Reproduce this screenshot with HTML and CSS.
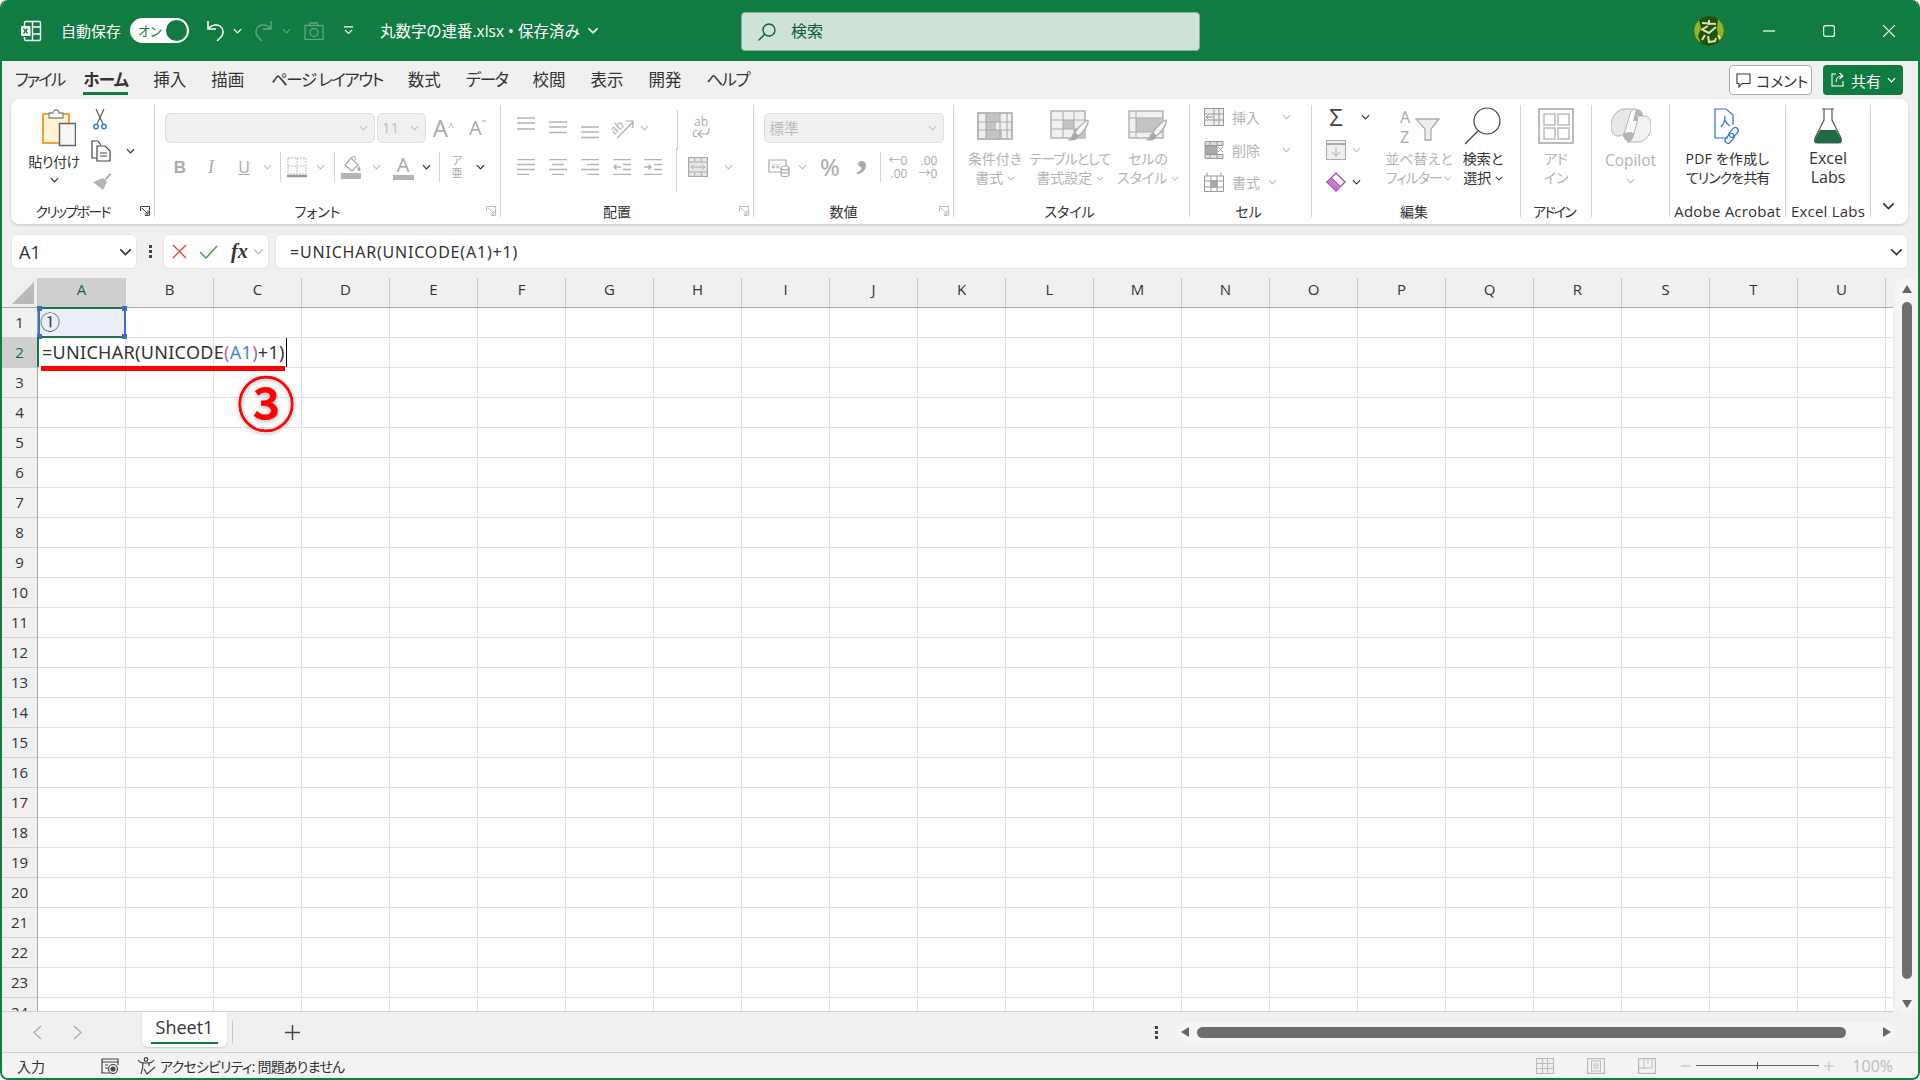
FILE: index.html
```html
<!DOCTYPE html>
<html lang="ja">
<head>
    <meta charset="UTF-8">
    <title>丸数字の連番.xlsx - Excel</title>
    <link rel="stylesheet" href="styles.css">
</head>
<body>
<svg class="sprites" width="0" height="0">
    <symbol id="chev" viewBox="0 0 10 6"><path d="M1 1l4 4 4-4" fill="none" stroke="currentColor" stroke-width="1.3"/></symbol>
    <symbol id="launcher" viewBox="0 0 10 10"><path d="M.5 5V.5H9.5V9.5H5M2 2l6 6M8 4.500V8H4.500" fill="none" stroke="currentColor"/></symbol>
    <symbol id="brush" viewBox="0 0 24 24"><path d="M22 2c-3 1-11 8-13 13l3 3c4-2 11-11 10-16z" fill="#f7f7f7" stroke="#aaa" stroke-width="1.2"/><path d="M9 15c-3 0-3 3-4 5-1 1-3 2-4 2 4 1 11 1 11-4z" fill="#aaa"/></symbol>
</svg>

<div class="window">
    <header class="titlebar">
        <svg class="t-excel" width="24" height="24" viewBox="0 0 24 24" fill="none" stroke="#fff" stroke-width="1.4"><path d="M7 2.500h13a1.500 1.500 0 0 1 1.500 1.500v16a1.500 1.500 0 0 1-1.500 1.500H7a1.500 1.500 0 0 1-1.500-1.500v-2M5.500 7V4A1.500 1.500 0 0 1 7 2.500M13.500 2.500v19M13.500 8h8M13.500 15h8"/><rect x="2" y="7" width="9.500" height="10" rx="1" fill="#fff" stroke="none"/><path d="M4.500 9.500l4 5M8.500 9.500l-4 5" stroke="#107c41"/></svg>
        <span class="t-autosave">自動保存</span>
        <div class="toggle"><span>オン</span><i></i></div>
        <svg class="t-undo" width="20" height="22" viewBox="0 0 20 22" fill="none" stroke="#fff" stroke-width="1.500"><path d="M2 1v8h8M2 9c3-4 8-5 12-3 4 3 4 8 1 11l-4 4"/></svg>
        <svg class="t-chev first" width="9" height="6"><use href="#chev"/></svg>
        <svg class="t-redo" width="20" height="22" viewBox="0 0 20 22" fill="none" stroke="#5fa585" stroke-width="1.500"><path d="M18 1v8h-8M18 9c-3-4-8-5-12-3-4 3-4 8-1 11l4 4"/></svg>
        <svg class="t-chev dim" width="9" height="6"><use href="#chev"/></svg>
        <svg class="t-camera" width="20" height="18" viewBox="0 0 20 18" fill="none" stroke="#5fa585" stroke-width="1.300"><path d="M1 3.500h18v14H1zM5 3.500l1-2.500h7l1 2.500"/><circle cx="10" cy="10.500" r="4"/></svg>
        <svg class="t-qat" width="11" height="9" viewBox="0 0 11 9" fill="none" stroke="#fff" stroke-width="1.200"><path d="M1 .8h9M2 4l3.500 3.500L9 4"/></svg>
        <span class="t-file">丸数字の連番.xlsx <b>•</b> 保存済み</span>
        <svg class="t-file-chev" width="12" height="7"><use href="#chev"/></svg>
        <div class="search">
            <svg width="20" height="20" viewBox="0 0 20 20" fill="none" stroke="#0d5c33" stroke-width="1.300"><circle cx="12" cy="8" r="6"/><path d="M7.500 12.500L1.500 18.500"/></svg>
            <span>検索</span>
        </div>
        <div class="avatar">
            <svg width="30" height="30" viewBox="0 0 30 30"><circle cx="15" cy="15" r="15" fill="#24500f"/><path d="M0 15a15 15 0 0 1 5-11l2 8-3 8 3 7A15 15 0 0 1 0 15zM30 15a15 15 0 0 0-6-12l-1 10 2 12a15 15 0 0 0 5-10z" fill="#8fb51f"/><path d="M8 7l14 1M15 4v5M7 14l7-4M22 11l-7 6-6-3M11 19l-3 5M14 20l1 6 6-1 1-3M24 19l2 4" stroke="#d8e8a0" stroke-width="2" fill="none"/></svg>
        </div>
        <div class="win-btns">
            <svg width="12" height="12" viewBox="0 0 12 12" stroke="#fff" stroke-width="1.200"><path d="M0 6h12"/></svg>
            <svg width="12" height="12" viewBox="0 0 12 12" fill="none" stroke="#fff" stroke-width="1.200"><rect x=".6" y=".6" width="10.800" height="10.800" rx="2"/></svg>
            <svg width="12" height="12" viewBox="0 0 12 12" stroke="#fff" stroke-width="1.200"><path d="M0 0l12 12M12 0L0 12"/></svg>
        </div>
    </header>

    <nav class="tabs">
        <span class="kana file-tab">ファイル</span>
        <span class="active">ホーム</span>
        <span>挿入</span>
        <span class="draw-tab">描画</span>
        <span class="kana">ページ レイアウト</span>
        <span>数式</span>
        <span class="kana">データ</span>
        <span>校閲</span>
        <span>表示</span>
        <span>開発</span>
        <span class="kana">ヘルプ</span>
        <div class="tab-actions">
            <button class="comment">
                <svg width="15" height="15" viewBox="0 0 15 15" fill="none" stroke="#333" stroke-width="1.100"><path d="M1 1h13v9.500H6L3 14v-3.500H1z"/></svg>
                コメント
            </button>
            <button class="share">
                <svg width="16" height="16" viewBox="0 0 16 16" fill="none" stroke="#fff" stroke-width="1.100"><path d="M6 2H2v12h11V9M6 10c0-4 3-6 6-6M9.500 1L13 4l-3.500 3"/></svg>
                共有
                <svg class="share-chev" width="9" height="6"><use href="#chev"/></svg>
            </button>
        </div>
    </nav>

    <section class="ribbon">
        <div class="group g-clip">
            <div class="body clip-body">
                <div class="paste">
                    <svg width="34" height="38" viewBox="0 0 34 38"><rect x="1" y="5" width="26" height="29" fill="#fff3d6" stroke="#f0a23a" stroke-width="2"/><path d="M7 9V4h4a3 3 0 0 1 6 0h4v5z" fill="#fff" stroke="#8a8a8a" stroke-width="1.300"/><rect x="17.500" y="14.500" width="16" height="22" fill="#f6f6f6" stroke="#666" stroke-width="1.500"/></svg>
                    <span class="txt">貼り付け</span>
                    <svg class="chev" width="9" height="6"><use href="#chev"/></svg>
                </div>
                <div class="clip-tools">
                    <svg width="14" height="22" viewBox="0 0 14 22" fill="none"><path d="M3 1l7 15M11 1L4 16" stroke="#555" stroke-width="1.100"/><circle cx="3" cy="18.500" r="2.300" stroke="#2f86d6" stroke-width="1.500"/><circle cx="11" cy="18.500" r="2.300" stroke="#2f86d6" stroke-width="1.500"/></svg>
                    <div class="copy-row">
                        <svg width="20" height="22" viewBox="0 0 20 22" fill="none" stroke="#444" stroke-width="1.200"><path d="M6 18H1V1h6l3 4"/><path d="M6 6h8l5 5v10H6z" fill="#fff"/><path d="M9 13h7M9 16h7"/></svg>
                        <svg class="chev" width="9" height="6"><use href="#chev"/></svg>
                    </div>
                    <svg width="20" height="20" viewBox="0 0 20 20"><path d="M12 8l6-7 1.500 1.500L13 9z" fill="#aaa"/><path d="M11 6l4 4-4 8-10-8z" fill="#b4b4b4"/></svg>
                </div>
            </div>
            <div class="label"><span class="tight">クリップボード</span><svg width="10" height="10"><use href="#launcher"/></svg></div>
        </div>

        <div class="group g-font">
            <div class="body">
                <div class="row font-r1">
                    <div class="select"><svg class="chev dim" width="9" height="6"><use href="#chev"/></svg></div>
                    <div class="select"><span>11</span><svg class="chev dim" width="9" height="6"><use href="#chev"/></svg></div>
                    <span class="glyph grow">A<sup>^</sup></span>
                    <span class="glyph shrink">A<sup>ˇ</sup></span>
                </div>
                <div class="row font-r2">
                    <span class="glyph bold">B</span>
                    <span class="glyph italic">I</span>
                    <span class="glyph under">U</span>
                    <svg class="chev dim" width="9" height="6"><use href="#chev"/></svg>
                    <i class="sep"></i>
                    <svg width="20" height="21" viewBox="0 0 20 21" fill="none"><path d="M1 1h18v16H1zM10 1v16M1 9h18" stroke="#bbb" stroke-dasharray="2 1"/><path d="M0 19h20" stroke="#999" stroke-width="2.500"/></svg>
                    <svg class="chev dim" width="9" height="6"><use href="#chev"/></svg>
                    <i class="sep"></i>
                    <svg width="22" height="24" viewBox="0 0 22 24"><path d="M4 10l6-7 7 7-6 6z" fill="#fff" stroke="#aaa" stroke-width="1.300"/><path d="M10 3l3-2 2 4" fill="none" stroke="#aaa"/><path d="M18 11c2 3 2 5 0 5s-2-2 0-5z" fill="#aaa"/><rect x="0" y="18" width="20" height="6" fill="#b4b4b4"/></svg>
                    <svg class="chev dim" width="9" height="6"><use href="#chev"/></svg>
                    <span class="glyph color">A</span>
                    <svg class="chev" width="9" height="6"><use href="#chev"/></svg>
                    <i class="sep"></i>
                    <span class="phonetic">ア<br>亜</span>
                    <svg class="chev" width="9" height="6"><use href="#chev"/></svg>
                </div>
            </div>
            <div class="label"><span>フォント</span><svg width="10" height="10" class="dim"><use href="#launcher"/></svg></div>
        </div>

        <div class="group g-align">
            <div class="body">
                <div class="row align-r1">
                    <svg class="lines" width="18" height="22" viewBox="0 0 18 22"><path d="M0 1h18M0 6h18M0 12h18"/></svg>
                    <svg class="lines" width="18" height="22" viewBox="0 0 18 22"><path d="M0 5h18M0 10h18M0 15.500h18"/></svg>
                    <svg class="lines" width="18" height="22" viewBox="0 0 18 22"><path d="M0 10h18M0 15h18M0 20.500h18"/></svg>
                    <svg class="ink" width="26" height="24" viewBox="0 0 26 24" fill="none" stroke="#aaa" stroke-width="1.200"><text x="1" y="16" transform="rotate(-42 7 12)" font-family="Open Sans" font-size="12" fill="#aaa" stroke="none">ab</text><path d="M8 22L24 6M17 5h7v7"/></svg>
                    <svg class="chev dim" width="9" height="6"><use href="#chev"/></svg>
                    <span></span>
                    <i class="sep tall-up"></i>
                    <svg class="ink" width="20" height="26" viewBox="0 0 20 26" fill="none" stroke="#aaa" stroke-width="1.200"><text x="3" y="11" font-family="Open Sans" font-size="12" fill="#aaa" stroke="none">ab</text><text x="1" y="22" font-family="Open Sans" font-size="12" fill="#aaa" stroke="none">c</text><path d="M18 13v3a3 3 0 0 1-3 3H8M11 15l-4 4 4 4"/></svg>
                </div>
                <div class="row align-r2">
                    <svg class="lines" width="18" height="16" viewBox="0 0 18 16"><path d="M0 .5h18M0 5.500h18M0 10.500h18M0 15.500h12"/></svg>
                    <svg class="lines" width="18" height="16" viewBox="0 0 18 16"><path d="M0 .5h18M3 5.500h12M0 10.500h18M3 15.500h12"/></svg>
                    <svg class="lines" width="18" height="16" viewBox="0 0 18 16"><path d="M0 .5h18M6 5.500h12M0 10.500h18M6 15.500h12"/></svg>
                    <svg class="lines" width="18" height="16" viewBox="0 0 18 16"><path d="M0 .5h18M10 5.500h8M10 10.500h8M0 15.500h18M8 8H1M3.500 5.500L1 8l2.500 2.500"/></svg>
                    <svg class="lines" width="18" height="16" viewBox="0 0 18 16"><path d="M0 .5h18M10 5.500h8M10 10.500h8M0 15.500h18M0 8h7M4.500 5.500L7 8l-2.500 2.500"/></svg>
                    <span></span>
                    <i class="sep tall-down"></i>
                    <svg width="20" height="20" viewBox="0 0 24 24" fill="none" stroke="#aaa" stroke-width="1.200"><rect x=".6" y=".6" width="22.800" height="22.800" fill="#e8e8e8" stroke-width="1.600"/><path d="M1 6h22M1 18h22M8 1v5M16 1v5M8 18v5M16 18v5"/><path d="M3 12h18M7 9l-3 3 3 3M17 9l3 3-3 3" fill="none"/></svg>
                    <svg class="chev dim" width="9" height="6"><use href="#chev"/></svg>
                </div>
            </div>
            <div class="label"><span>配置</span><svg width="10" height="10" class="dim"><use href="#launcher"/></svg></div>
        </div>

        <div class="group g-num">
            <div class="body">
                <div class="row num-r1">
                    <div class="select"><span>標準</span><svg class="chev dim" width="9" height="6"><use href="#chev"/></svg></div>
                </div>
                <div class="row num-r2">
                    <svg class="ink" width="22" height="20" viewBox="0 0 22 20" fill="none" stroke="#aaa" stroke-width="1.200"><path d="M13 15H1V3h17v6"/><text x="3" y="12" font-family="Open Sans" font-size="8" fill="#aaa" stroke="none">¥¥</text><ellipse cx="17" cy="11" rx="4" ry="2"/><path d="M13 11v7c0 2 8 2 8 0v-7M13 14.500c0 2 8 2 8 0"/></svg>
                    <svg class="chev dim" width="9" height="6"><use href="#chev"/></svg>
                    <span class="glyph percent">%</span>
                    <span class="glyph comma">,</span>
                    <i class="sep"></i>
                    <span class="decimal"><b>←0</b><b>.00</b></span>
                    <span class="decimal"><b>.00</b><b>→0</b></span>
                </div>
            </div>
            <div class="label"><span>数値</span><svg width="10" height="10" class="dim"><use href="#launcher"/></svg></div>
        </div>

        <div class="group g-style">
            <div class="body style-body">
                <div class="big dimmed">
                    <svg width="36" height="28" viewBox="0 0 36 28"><rect x="1" y="1" width="34" height="26" fill="#f0f0f0" stroke="#aaa" stroke-width="1.600"/><path d="M9 2h14v8H9zM9 10h10v8H9zM9 18h16v8H9z" fill="#c4c4c4"/><path d="M1 10h34M1 18h34M9 1v26M23 1v26M30 1v26" stroke="#aaa" stroke-width="1.100"/></svg>
                    <span>条件付き</span>
                    <span>書式 <svg class="chev dim" width="8" height="5"><use href="#chev"/></svg></span>
                </div>
                <div class="big dimmed">
                    <svg width="40" height="32" viewBox="0 0 40 32"><rect x="1" y="1" width="34" height="27" fill="#f0f0f0" stroke="#aaa" stroke-width="1.300"/><path d="M13 10h11v9H13zM24 19h11v9H24z" fill="#c4c4c4"/><path d="M1 10h34M1 19h34M13 1v27M24 1v27" stroke="#aaa"/><use href="#brush" x="16" y="8" width="24" height="24"/></svg>
                    <span class="tight-s">テーブルとして</span>
                    <span>書式設定 <svg class="chev dim" width="8" height="5"><use href="#chev"/></svg></span>
                </div>
                <div class="big dimmed">
                    <svg width="40" height="32" viewBox="0 0 40 32"><rect x="1" y="1" width="34" height="27" fill="#f0f0f0" stroke="#aaa" stroke-width="1.300"/><rect x="8" y="8" width="27" height="14" fill="#c4c4c4"/><path d="M1 8h34M1 22h34M8 1v27" stroke="#aaa"/><use href="#brush" x="16" y="8" width="24" height="24"/></svg>
                    <span>セルの</span>
                    <span>スタイル <svg class="chev dim" width="8" height="5"><use href="#chev"/></svg></span>
                </div>
            </div>
            <div class="label"><span>スタイル</span></div>
        </div>

        <div class="group g-cells">
            <div class="body list">
                <div class="list-row dimmed">
                    <svg width="20" height="18" viewBox="0 0 20 18" fill="none" stroke="#999"><rect x=".5" y=".5" width="19" height="17" fill="#eee"/><path d="M10 1v16M15 1v16M1 6h18M1 12h18"/><path d="M9 9H2M5 6L2 9l3 3" stroke="#fff" stroke-width="2"/><path d="M9 9H2M5 6L2 9l3 3" stroke="#888"/></svg>
                    <span>挿入</span>
                    <svg class="chev dim wide" width="9" height="6"><use href="#chev"/></svg>
                </div>
                <div class="list-row dimmed">
                    <svg width="20" height="18" viewBox="0 0 20 18" fill="none" stroke="#999"><path d="M1 .5h18v4H1zM1 13.500h18v4H1z" fill="#ddd"/><rect x="1" y="5" width="12" height="8" fill="#aaa"/><path d="M6 1v4M13 1v4M6 13v4M13 13v4M14 6l5 5M19 6l-5 5"/></svg>
                    <span>削除</span>
                    <svg class="chev dim wide" width="9" height="6"><use href="#chev"/></svg>
                </div>
                <div class="list-row dimmed">
                    <svg width="20" height="20" viewBox="0 0 20 20" fill="none" stroke="#999"><path d="M3 .5V4M17 .5V4M.5 4h19v15.500H.5zM1 9h18M1 15h18M7 4v15M13 4v15"/><rect x="7" y="9" width="6" height="6" fill="#aaa"/></svg>
                    <span>書式</span>
                    <svg class="chev dim" width="9" height="6"><use href="#chev"/></svg>
                </div>
            </div>
            <div class="label"><span>セル</span></div>
        </div>

        <div class="group g-edit">
            <div class="body edit-body">
                <div class="list edit-list">
                    <div class="list-row">
                        <span class="glyph sigma">Σ</span>
                        <svg class="chev" width="9" height="6"><use href="#chev"/></svg>
                    </div>
                    <div class="list-row short">
                        <svg width="20" height="20" viewBox="0 0 20 20" fill="none" stroke="#aaa"><rect x=".5" y=".5" width="19" height="19" fill="#eee"/><path d="M1 4h18" stroke-width="2"/><path d="M10 7v9M6 12l4 4 4-4"/></svg>
                        <svg class="chev dim" width="9" height="6"><use href="#chev"/></svg>
                    </div>
                    <div class="list-row short">
                        <svg width="20" height="20" viewBox="0 0 20 20"><path d="M10 1l9 9-9 9-9-9z" fill="#fff" stroke="#a94db5" stroke-width="1.400"/><path d="M5.500 5.500l9 9-4.500 4.500-9-9z" fill="#c27ccb" stroke="#a94db5"/></svg>
                        <svg class="chev" width="9" height="6"><use href="#chev"/></svg>
                    </div>
                </div>
                <div class="big dimmed big-sort">
                    <svg class="ink" width="44" height="38" viewBox="0 0 44 38" fill="none" stroke="#aaa" stroke-width="1.300"><text x="3" y="16" font-family="Open Sans" font-size="16" fill="#aaa" stroke="none">A</text><text x="3" y="36" font-family="Open Sans" font-size="16" fill="#aaa" stroke="none">Z</text><path d="M19 12h23l-8 10v11h-6V22z" fill="#eee"/></svg>
                    <span>並べ替えと</span>
                    <span class="tight-s">フィルター <svg class="chev dim" width="8" height="5"><use href="#chev"/></svg></span>
                </div>
                <div class="big big-find">
                    <svg width="38" height="40" viewBox="0 0 38 40" fill="none" stroke="#444" stroke-width="1.200"><circle cx="23" cy="15" r="13"/><path d="M14 25L1 38"/></svg>
                    <span>検索と</span>
                    <span>選択 <svg class="chev" width="8" height="5"><use href="#chev"/></svg></span>
                </div>
            </div>
            <div class="label"><span>編集</span></div>
        </div>

        <div class="group g-addin">
            <div class="body">
                <div class="big dimmed">
                    <svg width="36" height="36" viewBox="0 0 36 36" fill="none" stroke="#bbb" stroke-width="1.500"><rect x="1" y="1" width="34" height="34" stroke-width="2"/><rect x="6" y="6" width="11" height="11"/><rect x="20" y="6" width="11" height="11"/><rect x="6" y="20" width="11" height="11"/><rect x="20" y="20" width="11" height="11"/></svg>
                    <span>アド</span>
                    <span>イン</span>
                </div>
            </div>
            <div class="label"><span class="tight">アドイン</span></div>
        </div>

        <div class="group g-copilot">
            <div class="body">
                <div class="big dimmed">
                    <svg width="40" height="42" viewBox="0 0 40 42"><path d="M25 4c4 0 6 2 7 6l2 6H22zM11 28c1 5 4 9 8 9h8c3 0 5-2 6-4l-13-6z" fill="#b4b4b4"/><path d="M14 4h11c-3 0-5 2-6 5l-5 17c-1 3-3 5-6 5H6c-3 0-6-4-6-10C0 12 6 4 14 4z" fill="#e8e8e8" stroke="#b4b4b4"/><path d="M25 11h9c4 0 6 4 6 10 0 9-6 16-13 16H16c3 0 5-2 6-5l4-15c1-3 1-5-1-6z" fill="#f2f2f2" stroke="#b4b4b4"/></svg>
                    <span class="copilot-txt">Copilot</span>
                    <svg class="chev dim" width="9" height="6"><use href="#chev"/></svg>
                </div>
            </div>
        </div>

        <div class="group g-acrobat">
            <div class="body">
                <div class="big">
                    <svg width="30" height="36" viewBox="0 0 30 36" fill="none" stroke="#2f6fd8" stroke-width="1.200"><path d="M15 30H2V1h11l7 6v10"/><path d="M8 19c3-3 4-8 4-11M12 12c1 3 3 5 5 6"/><rect x="18" y="19" width="6" height="11" rx="3" transform="rotate(40 21 24)"/><rect x="14" y="25" width="6" height="11" rx="3" transform="rotate(40 17 30)"/></svg>
                    <span class="wide-s">PDF を作成し</span>
                    <span class="tight-s">てリンクを共有</span>
                </div>
            </div>
            <div class="label label-plain"><span>Adobe Acrobat</span></div>
        </div>

        <div class="group g-labs">
            <div class="body">
                <div class="big big-latin">
                    <svg width="30" height="36" viewBox="0 0 30 36"><path d="M9 1h12M11 1v11L2 30c-1 3 0 5 3 5h20c3 0 4-2 3-5l-9-18V1" fill="none" stroke="#555" stroke-width="1.200"/><path d="M7 22h16l5 9c1 3 0 4-3 4H5c-3 0-4-1-3-4z" fill="#1f6b43"/></svg>
                    <span>Excel</span>
                    <span>Labs</span>
                </div>
            </div>
            <div class="label label-plain"><span>Excel Labs</span></div>
        </div>

        <div class="collapse"><svg width="13" height="8"><use href="#chev"/></svg></div>
    </section>

    <div class="formula-bar">
        <div class="name-box"><span>A1</span><svg width="13" height="8"><use href="#chev"/></svg></div>
        <div class="fb-dots"><i></i><i></i><i></i></div>
        <div class="fb-btns">
            <svg width="15" height="15" viewBox="0 0 15 15" stroke="#e2393b" stroke-width="1.300"><path d="M1 1l13 13M14 1L1 14"/></svg>
            <svg width="19" height="14" viewBox="0 0 19 14" fill="none" stroke="#3fa34d" stroke-width="1.500"><path d="M1 7l6 6L18 1"/></svg>
            <span class="fx">fx</span>
            <svg class="chev dim" width="11" height="7"><use href="#chev"/></svg>
        </div>
        <div class="fb-input"><span>=UNICHAR(UNICODE(A1)+1)</span><svg width="13" height="8"><use href="#chev"/></svg></div>
    </div>

    <main class="sheet">
        <div class="grid-wrap">
            <div class="col-heads">
                <div class="corner"><i></i></div>
                <span class="sel">A</span><span>B</span><span>C</span><span>D</span><span>E</span><span>F</span><span>G</span>
                <span>H</span><span>I</span><span>J</span><span>K</span><span>L</span><span>M</span><span>N</span>
                <span>O</span><span>P</span><span>Q</span><span>R</span><span>S</span><span>T</span><span>U</span>
            </div>
            <div class="grid-body">
                <div class="row-heads">
                    <span>1</span><span class="sel">2</span><span>3</span><span>4</span><span>5</span><span>6</span>
                    <span>7</span><span>8</span><span>9</span><span>10</span><span>11</span><span>12</span>
                    <span>13</span><span>14</span><span>15</span><span>16</span><span>17</span><span>18</span>
                    <span>19</span><span>20</span><span>21</span><span>22</span><span>23</span><span>24</span>
                </div>
                <div class="cells">
                    <div class="cell-a1"><span>①</span><i class="h h1"></i><i class="h h2"></i><i class="h h3"></i><i class="h h4"></i></div>
                    <div class="cell-edit">=UNICHAR(UNICODE<em>(</em><u>A1</u><em>)</em>+1)<i></i></div>
                    <div class="red-line"></div>
                    <div class="marker">③</div>
                </div>
            </div>
        </div>
        <div class="vscroll">
            <i class="arrow up"></i>
            <div class="v-thumb"></div>
            <i class="arrow down"></i>
        </div>
    </main>

    <div class="sheet-tabs">
        <div class="tab-nav">
            <svg width="9" height="15" viewBox="0 0 9 15" fill="none" stroke="#aaa" stroke-width="1.300"><path d="M8 1L1 7.500 8 14"/></svg>
            <svg width="9" height="15" viewBox="0 0 9 15" fill="none" stroke="#aaa" stroke-width="1.300"><path d="M1 1l7 6.500L1 14"/></svg>
        </div>
        <div class="sheet-tab"><span>Sheet1</span></div>
        <i class="tab-sep"></i>
        <svg class="add" width="15" height="15" viewBox="0 0 15 15" stroke="#444" stroke-width="1.500"><path d="M7.500 0v15M0 7.500h15"/></svg>
        <div class="h-dots"><i></i><i></i><i></i></div>
        <div class="hscroll">
            <i class="arrow left"></i>
            <div class="h-thumb"></div>
            <i class="arrow right"></i>
        </div>
    </div>

    <footer class="status">
        <span class="st-mode">入力</span>
        <svg class="st-macro" width="18" height="16" viewBox="0 0 18 16" fill="none" stroke="#444" stroke-width="1.200"><path d="M9 15H1V1h16v6M1 4h16M4 7h3M4 10h3"/><circle cx="12" cy="11" r="4.500"/><circle cx="12" cy="11" r="2" fill="#444"/></svg>
        <svg class="st-access" width="20" height="18" viewBox="0 0 20 18" fill="none" stroke="#444" stroke-width="1.200"><circle cx="9" cy="2.500" r="1.800"/><path d="M1 3c2 3 4 3 8 3s6 0 8-3M6 6c0 4 0 5-2 11M12 6v3M7 12l3 5 8-7"/></svg>
        <span class="st-text">アクセシビリティ: 問題ありません</span>
        <div class="st-right">
            <svg width="18" height="16" viewBox="0 0 18 16" fill="none" stroke="#bbb"><rect x=".5" y=".5" width="17" height="15" fill="#eee"/><path d="M1 5.500h16M1 10.500h16M6.500 1v14M11.500 1v14"/></svg>
            <svg width="18" height="16" viewBox="0 0 18 16" fill="none" stroke="#bbb"><rect x=".5" y=".5" width="17" height="15" stroke-width="1.400"/><rect x="4.500" y="3" width="9" height="10"/><path d="M6 6h6M6 8h6M6 10h6"/></svg>
            <svg width="18" height="16" viewBox="0 0 18 16" fill="none" stroke="#bbb"><rect x=".5" y=".5" width="17" height="15" stroke-width="1.400"/><path d="M1 10h13V1M6 1v9M10 1v5"/></svg>
            <div class="zoom">
                <svg width="10" height="10" viewBox="0 0 10 10" stroke="#bbb"><path d="M0 5h10"/></svg>
                <div class="slider"><i></i></div>
                <svg width="10" height="10" viewBox="0 0 10 10" stroke="#bbb"><path d="M0 5h10M5 0v10"/></svg>
            </div>
            <span class="pct">100%</span>
        </div>
    </footer>
</div>
</body>
</html>
```

FILE: styles.css
```css
* {
    box-sizing: border-box;
}

html, body {
    margin: 0;
    height: 100%;
}

body {
    background-color: #fff;
    color: #333;
    font-family: "Open Sans", "Noto Sans CJK JP", sans-serif;
    font-feature-settings: "palt";
    font-size: 14px;
    overflow: hidden;
}

svg {
    display: block;
    flex: none;
}

.ink {
    overflow: visible;
}

.sprites {
    position: absolute;
}

.window {
    display: flex;
    flex-direction: column;
    height: 1080px;
    background-color: #f0f0f0;
    border: 2px solid #107c41;
    border-top: none;
    border-radius: 8px;
    overflow: hidden;
}

/* title bar */
.titlebar {
    display: flex;
    align-items: center;
    height: 61px;
    flex: none;
    background-color: #107c41;
    color: #fff;
    margin: 0 -2px;
    padding-left: 19px;
}

.t-autosave {
    margin-left: 18px;
    font-size: 15px;
}

.toggle {
    display: flex;
    align-items: center;
    justify-content: space-between;
    width: 59px;
    height: 25px;
    margin-left: 9px;
    padding: 0 2px 0 8px;
    background-color: #fff;
    border-radius: 13px;
    color: #107c41;
    font-size: 13px;
}

.toggle i {
    width: 21px;
    height: 21px;
    background-color: #107c41;
    border-radius: 50%;
}

.t-undo { margin-left: 17px; }
.t-chev { margin-left: 9px; color: #fff; }
.t-chev.first { margin-left: 7px; }
.t-chev.dim { color: #5fa585; }
.t-redo { margin-left: 11px; }
.t-camera { margin-left: 13px; }
.t-qat { margin-left: 19px; }

.t-file {
    margin-left: 26px;
    font-size: 15.500px;
    white-space: nowrap;
}

.t-file b {
    font-weight: 400;
}

.t-file-chev {
    margin-left: 7px;
    color: #fff;
}

.search {
    position: absolute;
    left: 741px;
    top: 12px;
    display: flex;
    align-items: center;
    gap: 14px;
    width: 459px;
    height: 39px;
    padding-left: 15px;
    background-color: #cfe2d8;
    border: 1px solid #8fae9e;
    border-radius: 4px;
    color: #0d5c33;
    font-size: 16px;
}

.search span {
    margin-top: -3px;
}

.avatar {
    margin-left: auto;
    margin-right: 39px;
}

.avatar svg {
    border-radius: 50%;
}

.win-btns {
    display: flex;
    gap: 48px;
    margin-right: 25px;
}

/* ribbon tabs */
.tabs {
    display: flex;
    align-items: center;
    gap: 25px;
    height: 38px;
    flex: none;
    padding-left: 13px;
    font-size: 16.500px;
    white-space: nowrap;
}

.tabs > span {
    position: relative;
    line-height: 38px;
}

.tabs .kana {
    letter-spacing: -1.500px;
}

.tabs .file-tab {
    margin-right: -6px;
    letter-spacing: -2px;
}

.tabs .draw-tab {
    margin-right: 2px;
}

.tabs .active {
    font-weight: 700;
    letter-spacing: -0.700px;
}

.tabs .active::after {
    content: "";
    position: absolute;
    left: 0;
    right: 0;
    bottom: 4px;
    height: 3px;
    background-color: #107c41;
}

.tab-actions {
    display: flex;
    gap: 11px;
    margin-left: auto;
    margin-right: 15px;
}

.tab-actions button {
    display: flex;
    align-items: center;
    height: 30px;
    border-radius: 4px;
    font-family: inherit;
    font-feature-settings: inherit;
    font-size: 15px;
}

.comment {
    gap: 5px;
    width: 83px;
    padding: 0 0 0 6px;
    background-color: #fff;
    border: 1px solid #aaa;
    color: #333;
}

.share {
    gap: 5px;
    width: 80px;
    padding: 0 0 0 7px;
    background-color: #107c41;
    border: none;
    color: #fff;
}

.share-chev {
    margin-left: 1px;
}

/* ribbon */
.ribbon {
    display: flex;
    flex: none;
    height: 125px;
    margin: 0 10px 0 9px;
    padding: 6px 0 7px;
    background-color: #fff;
    border-radius: 8px;
    box-shadow: 0 1px 3px rgba(0, 0, 0, 0.2);
}

.group {
    display: flex;
    flex-direction: column;
    flex: none;
    border-right: 1px solid #d4d4d4;
}

.g-clip { width: 144px; }
.g-font { width: 346px; }
.g-align { width: 253px; }
.g-num { width: 200px; }
.g-style { width: 236px; }
.g-cells { width: 122px; }
.g-edit { width: 209px; }
.g-addin { width: 71px; }
.g-copilot { width: 78px; }
.g-acrobat { width: 116px; }
.g-labs { width: 85px; }

.body {
    height: 99px;
    flex: none;
}

.label {
    display: flex;
    align-items: center;
    height: 14px;
    padding-right: 4px;
    color: #333;
    font-size: 14px;
    white-space: nowrap;
}

.label span {
    flex: 1;
    text-align: center;
}

.label .tight {
    letter-spacing: -1.700px;
}

.label svg {
    margin-left: 6px;
    color: #444;
}

.label svg.dim {
    color: #bbb;
}

.label-plain {
    padding-right: 0;
    font-size: 15px;
    letter-spacing: 0.200px;
}

.row {
    display: grid;
    align-items: center;
    justify-items: center;
    padding-left: 10px;
}

.row:first-child {
    height: 40px;
    margin-top: 3px;
}

.row:last-child {
    height: 38px;
}

.font-r1 { grid-template-columns: 210px 2px 49px 35px 33px; }
.font-r1 .select:nth-child(2) { grid-column: 3; }
.font-r2 { grid-template-columns: 30px 32px 34px 12px 14px 20px 26px 3px 32px 16px 38px 8px 18px 18px 28px; }
.align-r1 { padding-left: 9px; grid-template-columns: 32px 32px 32px 31px 14px 25px 3px 44px; }
.align-r2 { padding-left: 9px; grid-template-columns: 32px 32px 32px 31px 32px 6px 3px 40px 20px; }
.num-r1 { grid-template-columns: 180px; }
.num-r2 { grid-template-columns: 30px 16px 40px 24px 12px 24px 36px; }

.sep {
    justify-self: center;
    width: 1px;
    height: 30px;
    background-color: #d4d4d4;
}

.tall-up, .tall-down {
    height: 100%;
}

.tall-up {
    margin-top: 4px;
}

.tall-down {
    height: calc(100% + 6px);
    margin-bottom: -6px;
}

.select {
    display: flex;
    align-items: center;
    justify-content: space-between;
    justify-self: stretch;
    height: 30px;
    padding: 0 6px 0 4px;
    background-color: #f0f0f0;
    border: 1px solid #e0e0e0;
    border-radius: 5px;
    color: #bbb;
    font-size: 15px;
}

.select span {
    margin-top: -2px;
}

.select .chev:only-child {
    margin-left: auto;
}

.chev {
    color: #333;
}

.chev.dim {
    color: #c0c0c0;
}

.glyph {
    color: #aaa;
    line-height: 1;
}

.grow, .shrink {
    font-size: 24px;
    position: relative;
    white-space: nowrap;
}

.shrink {
    font-size: 20px;
}

.grow sup, .shrink sup {
    font-size: 11px;
    vertical-align: 6px;
    line-height: 0;
}

.bold {
    font-family: "Liberation Sans", sans-serif;
    font-size: 17px;
    font-weight: 700;
}

.italic {
    font-family: "Liberation Serif", serif;
    font-size: 18px;
    font-style: italic;
}

.under {
    font-size: 16px;
    text-decoration: underline;
}

.color {
    font-size: 20px;
    border-bottom: 5px solid #b4b4b4;
    width: 21px;
    text-align: center;
}

.phonetic {
    color: #aaa;
    font-size: 11px;
    line-height: 12px;
    text-align: center;
}

.lines {
    fill: none;
    stroke: #b4b4b4;
    stroke-width: 1.400;
}

.percent {
    font-family: "Noto Sans", sans-serif;
    font-size: 24px;
}

.comma {
    font-family: "Liberation Serif", serif;
    font-size: 44px;
    font-weight: 700;
    margin-top: -26px;
}

.decimal {
    display: flex;
    flex-direction: column;
    align-items: flex-end;
    color: #aaa;
    font-size: 12px;
    line-height: 13px;
    white-space: nowrap;
}

.decimal b {
    font-weight: 400;
}

/* clipboard */
.clip-body {
    display: flex;
}

.paste {
    display: flex;
    flex-direction: column;
    align-items: center;
    width: 72px;
    padding-top: 4px;
    padding-left: 14px;
}

.paste svg:first-child {
    margin-left: 10px;
}

.paste .txt {
    margin-top: 6px;
    color: #333;
    line-height: 18px;
    letter-spacing: -0.500px;
    white-space: nowrap;
}

.paste .chev {
    margin-top: 6px;
}

.clip-tools {
    display: flex;
    flex-direction: column;
    gap: 10px;
    padding: 3px 0 0 1px;
}

.clip-tools > svg:first-child {
    margin-left: 9px;
}

.copy-row {
    display: flex;
    align-items: center;
    gap: 15px;
    margin-left: 7px;
}

.clip-tools > svg:last-child {
    margin-left: 8px;
}

/* big buttons */
.style-body, .edit-body {
    display: flex;
}

.big {
    display: flex;
    flex-direction: column;
    align-items: center;
    flex: none;
    height: 99px;
    color: #333;
    line-height: 19px;
    white-space: nowrap;
}

.big > svg:first-child {
    height: 42px;
    margin-bottom: 2px;
}

.big span svg {
    display: inline-block;
    vertical-align: 2px;
}

.big .tight-s {
    letter-spacing: -1px;
}

.big .wide-s {
    letter-spacing: 0.200px;
}

.big.dimmed {
    color: #b4b4b4;
}

.big-latin {
    font-size: 16px;
}

.g-style .big:nth-child(1) { width: 82px; }
.g-style .big:nth-child(2) { width: 68px; }
.g-style .big:nth-child(3) { width: 88px; }
.big-sort { width: 68px; }
.big-find { width: 60px; }

.copilot-txt {
    margin-top: 2px;
    margin-bottom: 8px;
    font-size: 15.500px;
}

/* cells and editing lists */
.list {
    margin-top: -4px;
    height: 103px;
}

.g-cells .list {
    padding-left: 14px;
}

.list-row {
    display: flex;
    align-items: center;
    gap: 8px;
    height: 32.500px;
}

.list-row.dimmed {
    color: #b4b4b4;
}

.list-row .wide {
    margin-left: 14px;
}

.edit-list {
    width: 73px;
    padding-left: 14px;
}

.sigma {
    width: 20px;
    color: #444;
    font-size: 24px;
    text-align: center;
}

.edit-list .list-row:first-child {
    gap: 15px;
}

.edit-list .short {
    gap: 6px;
}

.collapse {
    display: flex;
    flex: 1;
    align-items: flex-end;
    justify-content: center;
    padding-bottom: 7px;
    padding-right: 2px;
}

/* formula bar */
.formula-bar {
    display: flex;
    align-items: center;
    flex: none;
    height: 35px;
    margin: 10px 10px 9px 9px;
}

.name-box, .fb-btns, .fb-input {
    display: flex;
    align-items: center;
    height: 35px;
    background-color: #fff;
    border: 1px solid #e4e4e4;
    border-radius: 6px;
}

.name-box {
    justify-content: space-between;
    width: 126px;
    padding: 0 4px 0 7px;
    font-size: 18px;
}

.fb-dots {
    display: flex;
    flex-direction: column;
    align-items: center;
    gap: 2px;
    width: 26px;
}

.fb-dots i, .h-dots i {
    width: 3px;
    height: 3px;
    background-color: #444;
}

.fb-btns {
    width: 106px;
    padding-left: 8px;
}

.fb-btns svg:nth-child(2) {
    margin-left: 12px;
}

.fx {
    margin-left: 13px;
    font-family: "Liberation Serif", serif;
    font-size: 20px;
    font-style: italic;
    font-weight: 700;
}

.fb-btns .chev {
    margin-left: 5px;
}

.fb-input {
    flex: 1;
    justify-content: space-between;
    margin-left: 6px;
    padding: 0 4px 0 14px;
    font-family: "Noto Sans", sans-serif;
    font-size: 16px;
    letter-spacing: 0.800px;
}

/* sheet */
.sheet {
    display: flex;
    flex: 1;
    min-height: 0;
}

.grid-wrap {
    display: flex;
    flex-direction: column;
    width: 1891px;
    flex: none;
}

.col-heads {
    display: flex;
    height: 30px;
    flex: none;
    background-color: #f0f0f0;
    border-bottom: 1px solid #a8a8a8;
}

.corner {
    width: 36px;
    flex: none;
    display: flex;
    align-items: flex-end;
    justify-content: flex-end;
    padding: 0 3px 3px 0;
    border-right: 1px solid #c8c8c8;
}

.corner i {
    width: 22px;
    height: 22px;
    background-color: #b8b8b8;
    clip-path: polygon(100% 0, 100% 100%, 0 100%);
}

.col-heads span {
    width: 88px;
    flex: none;
    line-height: 22px;
    text-align: center;
    border-right: 1px solid #c8c8c8;
    font-size: 15px;
}

.col-heads .sel {
    background-color: #cfcfcf;
    color: #0f6a3a;
}

.grid-body {
    display: flex;
    flex: 1;
    min-height: 0;
    background-color: #fff;
    border-bottom: 1px solid #d0d0d0;
}

.row-heads {
    width: 36px;
    flex: none;
    border-right: 1px solid #a8a8a8;
    overflow: hidden;
    background-color: #f0f0f0;
}

.row-heads span {
    display: block;
    height: 30px;
    line-height: 29px;
    text-align: center;
    border-bottom: 1px solid #d0d0d0;
    font-size: 15px;
}

.row-heads .sel {
    background-color: #cfcfcf;
    color: #0f6a3a;
}

.cells {
    position: relative;
    flex: 1;
    background-image:
        repeating-linear-gradient(to right, transparent 0 87px, #e0e0e0 87px 88px),
        repeating-linear-gradient(to bottom, transparent 0 29px, #e0e0e0 29px 30px);
}

.cell-a1 {
    position: absolute;
    left: 0;
    top: -1px;
    width: 88px;
    height: 31px;
    padding-left: 0;
    background-color: #e9eef8;
    border-top: 2px solid #217346;
    border-bottom: 2px solid #217346;
    border-left: 2px solid #3b6fc4;
    border-right: 2px solid #3b6fc4;
    font-size: 20px;
    line-height: 28px;
    color: #444;
}

.h {
    position: absolute;
    width: 5px;
    height: 5px;
    background-color: #3b6fc4;
}

.h1 { left: -3px; top: -3px; }
.h2 { right: -3px; top: -3px; }
.h3 { left: -3px; bottom: -3px; }
.h4 { right: -3px; bottom: -3px; }

.cell-edit {
    position: absolute;
    left: -1px;
    top: 29px;
    display: flex;
    align-items: center;
    height: 30px;
    padding-left: 3px;
    border-left: 2px solid #217346;
    font-family: "Noto Sans", "Open Sans", sans-serif;
    font-size: 18px;
    letter-spacing: 0.300px;
    white-space: nowrap;
}

.cell-edit em {
    color: #a463c0;
    font-style: normal;
}

.cell-edit u {
    color: #4a86d8;
    text-decoration: none;
}

.cell-edit i {
    width: 1px;
    height: 29px;
    margin-left: 1px;
    background-color: #000;
}

.red-line {
    position: absolute;
    left: 3px;
    top: 58px;
    width: 244px;
    height: 5px;
    background-color: #f00;
}

.marker {
    position: absolute;
    left: 191px;
    top: 55px;
    width: 74px;
    color: #f00;
    font-family: "Noto Sans CJK JP", sans-serif;
    font-size: 58px;
    font-weight: 500;
    line-height: 76px;
    text-align: center;
    -webkit-text-stroke: 0.800px #f00;
    text-shadow: 0 0 2px #fff, 0 0 3px #fff, 0 1px 4px rgba(0, 0, 0, 0.5);
}

.vscroll {
    display: flex;
    flex-direction: column;
    align-items: center;
    width: 23px;
    flex: none;
    margin-left: 2px;
    padding: 7px 0 4px;
    background-color: #f5f5f5;
    border-radius: 10px;
}

.v-thumb {
    width: 10px;
    height: 677px;
    margin: 9px 0 auto;
    background-color: #6e6e6e;
    border-radius: 5px;
}

.arrow {
    width: 0;
    height: 0;
    flex: none;
    border-style: solid;
    border-color: transparent;
}

.arrow.up { border-width: 0 5px 8px; border-bottom-color: #666; }
.arrow.down { border-width: 8px 5px 0; border-top-color: #666; }
.arrow.left { border-width: 5px 8px 5px 0; border-right-color: #666; }
.arrow.right { border-width: 5px 0 5px 8px; border-left-color: #666; }

/* sheet tabs */
.sheet-tabs {
    display: flex;
    align-items: center;
    flex: none;
    height: 40px;
}

.tab-nav {
    display: flex;
    gap: 31px;
    width: 140px;
    padding-left: 31px;
}

.sheet-tab {
    align-self: flex-start;
    width: 85px;
    height: 35px;
    padding: 0 9px;
    background-color: #fff;
    border-radius: 0 0 6px 6px;
    box-shadow: 0 1px 2px rgba(0, 0, 0, 0.15);
    font-size: 18px;
    text-align: center;
}

.sheet-tab span {
    display: block;
    height: 32px;
    line-height: 31px;
    border-bottom: 2px solid #107c41;
}

.tab-sep {
    width: 1px;
    height: 24px;
    margin: 0 0 0 5px;
    background-color: #c8c8c8;
}

.add {
    margin-left: 52px;
}

.h-dots {
    display: flex;
    flex-direction: column;
    gap: 2px;
    margin-left: 855px;
}

.hscroll {
    display: flex;
    align-items: center;
    width: 720px;
    height: 21px;
    margin-left: 18px;
    padding: 0 5px;
    background-color: #f5f5f5;
    border-radius: 10px;
}

.h-thumb {
    width: 649px;
    height: 11px;
    margin: 0 auto 0 8px;
    background-color: #6e6e6e;
    border-radius: 6px;
}

/* status bar */
.status {
    display: flex;
    align-items: center;
    flex: none;
    height: 26px;
    padding-left: 15px;
    background-color: #f3f3f3;
    border-top: 1px solid #cfcfcf;
    font-size: 14px;
}

.st-macro { margin-left: 56px; }
.st-access { margin-left: 18px; margin-right: 3px; }

.st-text {
    letter-spacing: -0.800px;
}

.st-right {
    display: flex;
    align-items: center;
    gap: 33px;
    margin-left: auto;
    margin-right: 25px;
}

.zoom {
    display: flex;
    align-items: center;
    gap: 5px;
    margin-left: -8px;
}

.slider {
    position: relative;
    width: 123px;
    height: 1px;
    background-color: #666;
}

.slider i {
    position: absolute;
    left: 61px;
    top: -3px;
    width: 1px;
    height: 7px;
    background-color: #555;
}

.pct {
    margin-left: -15px;
    color: #bbb;
    font-size: 16px;
}
```
